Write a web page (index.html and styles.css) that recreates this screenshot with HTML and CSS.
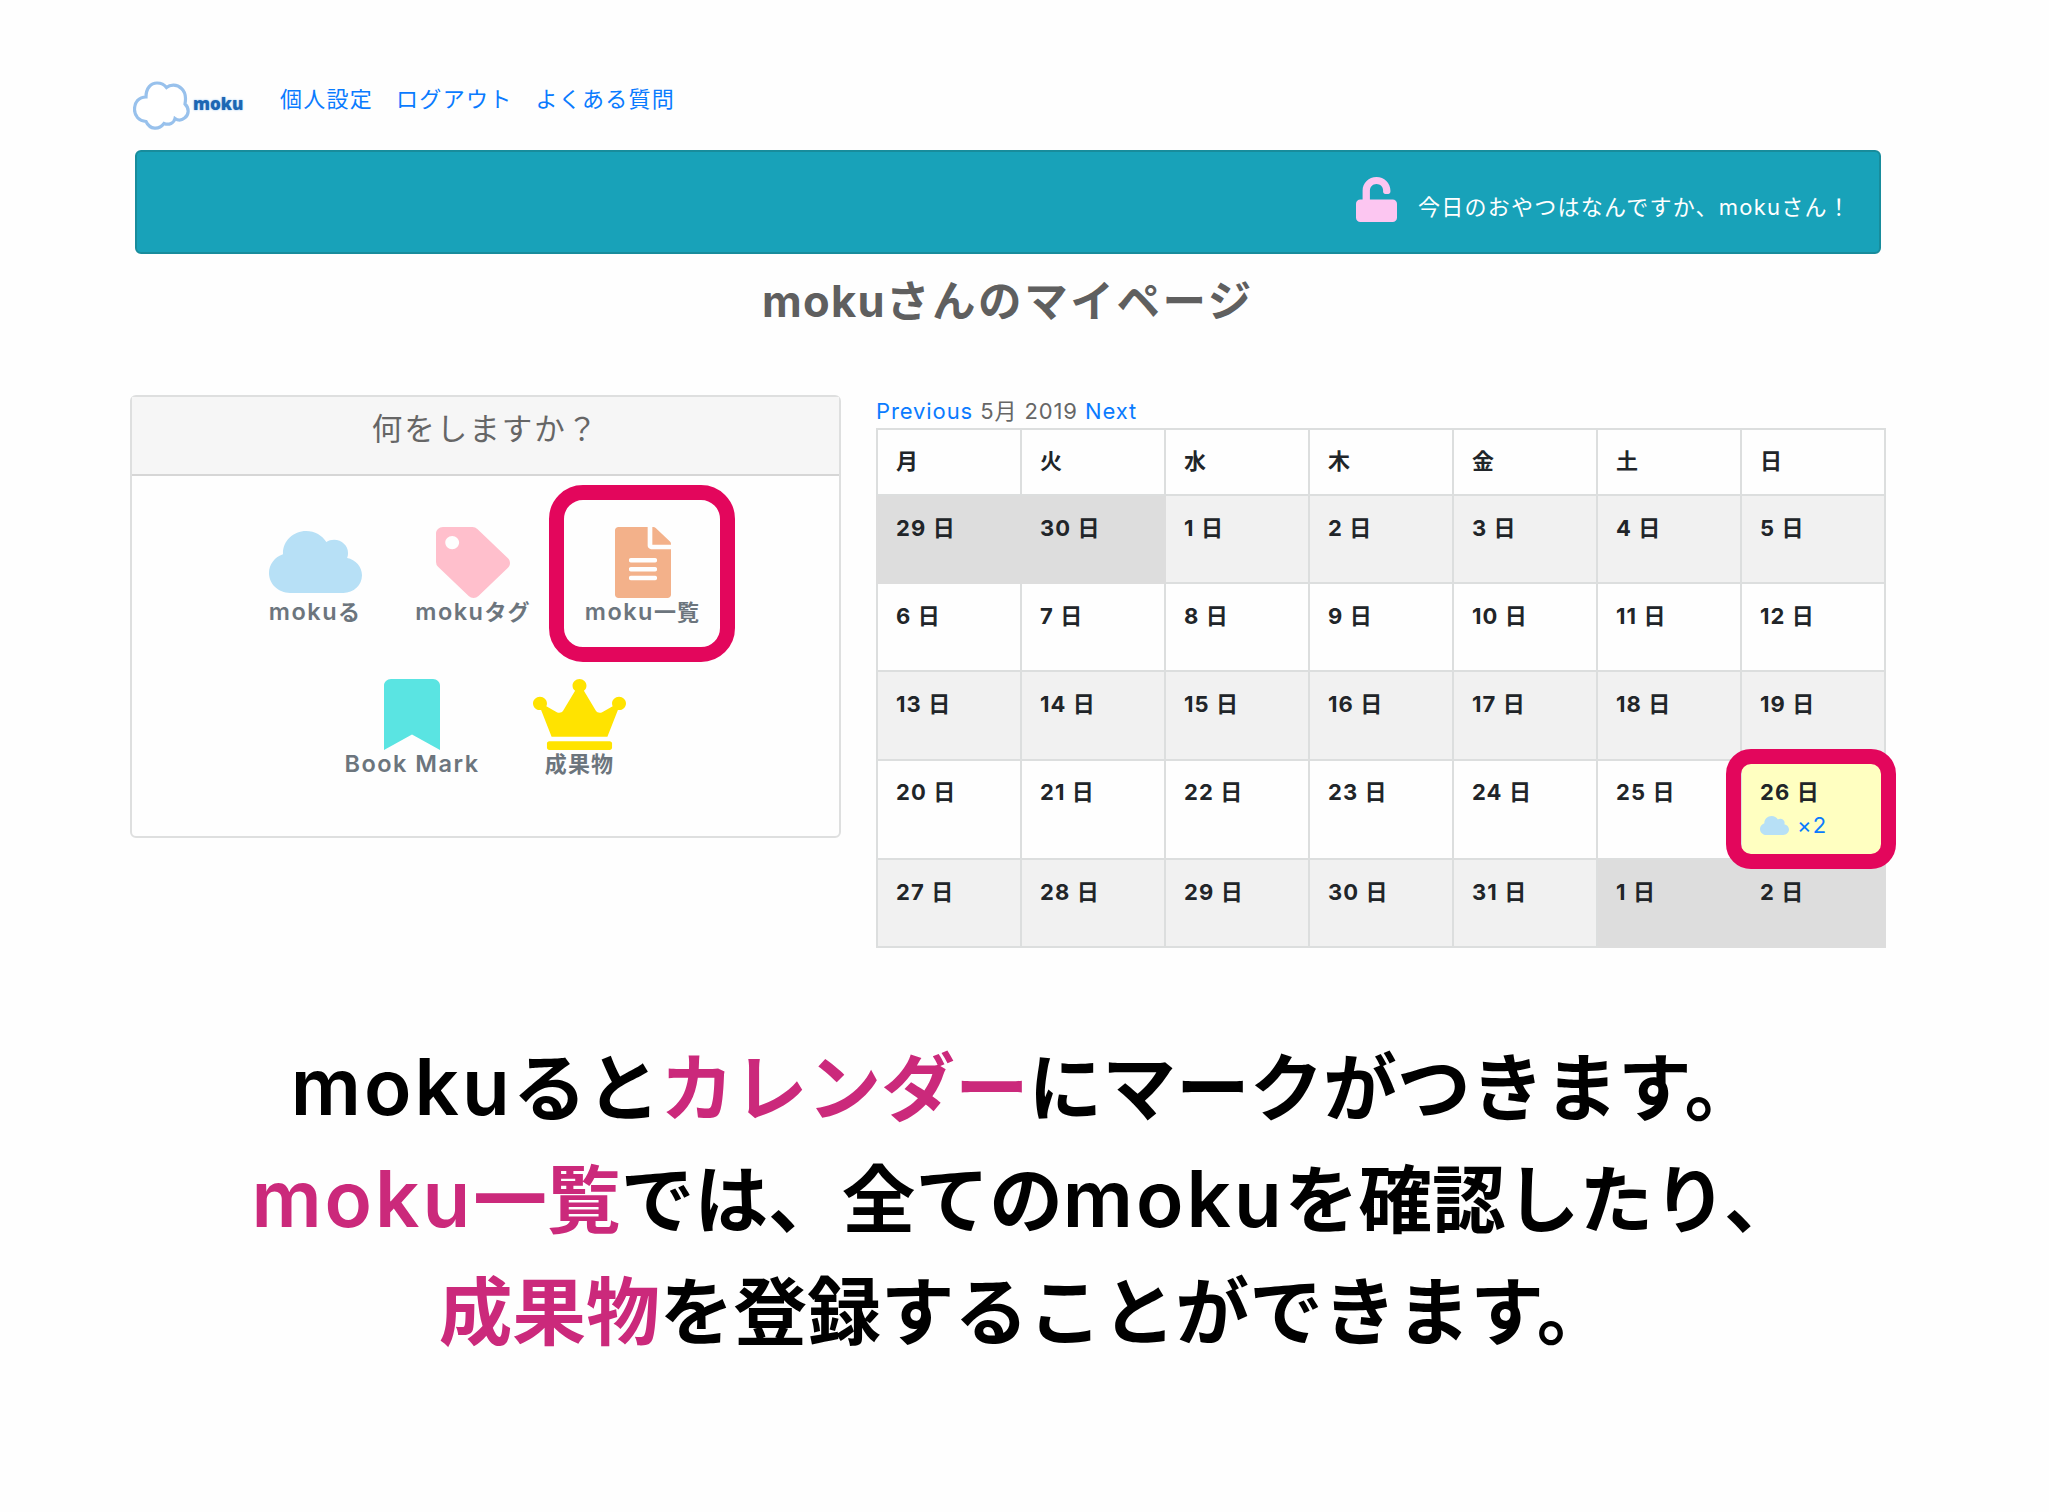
FILE: index.html
```html
<!DOCTYPE html>
<html lang="ja">
<head>
<meta charset="utf-8">
<title>mokuさんのマイページ</title>
<link rel="stylesheet" href="styles.css">
</head>
<body>
<svg class="defs" aria-hidden="true">
  <symbol id="cloud" viewBox="0 32 640 448" preserveAspectRatio="none"><path d="M537.600 226.600c4.100-10.700 6.400-22.400 6.400-34.600 0-53-43-96-96-96-19.700 0-38.100 6-53.300 16.200C367 64.200 315.300 32 256 32c-88.400 0-160 71.600-160 160 0 2.700.1 5.400.2 8.100C40.200 219.800 0 273.200 0 336c0 79.500 64.500 144 144 144h368c70.700 0 128-57.300 128-128 0-61.900-44-113.600-102.400-125.400z"/></symbol>
</svg>
<header class="nav">
  <a class="logo">
    <svg class="logo-cloud" viewBox="0 0 57 51"><path d="M13 17C13 8 18 3 24 3c4 0 7 1 9.500 4.500C37 4.500 44 4 48.500 8.500c4.500 4 4.500 10 3.500 15.500 4.500 4.500 4 11-.5 14-3 2.500-6.500 2.500-9.500.5-1 4.500-6 7-11 5-5 6.500-14 6.500-18-2C6 41 1.500 36 1.500 29.500 1.500 22 6 17 13 17z"/></svg>
    <span class="logo-text">moku</span>
  </a>
  <nav class="links"><a>個人設定</a><a>ログアウト</a><a>よくある質問</a></nav>
</header>
<section class="banner">
  <svg class="lock" viewBox="0 0 448 512" preserveAspectRatio="none"><path d="M400 256H152V152.900c0-39.600 31.700-72.500 71.300-72.900 40-.4 72.700 32.100 72.700 72v16c0 13.300 10.700 24 24 24h32c13.300 0 24-10.700 24-24v-16C376 68 307.500-.3 223.500 0 139.500.3 72 69.500 72 153.500V256H48c-26.500 0-48 21.500-48 48v160c0 26.500 21.500 48 48 48h352c26.500 0 48-21.500 48-48V304c0-26.500-21.500-48-48-48z"/></svg>
  <span class="greeting">今日のおやつはなんですか、mokuさん！</span>
</section>
<h1 class="title"><span class="title-name">moku</span>さんのマイページ</h1>
<main class="main">
  <section class="card">
    <h2 class="card-head">何をしますか？</h2>
    <div class="card-body">
      <div class="row row-top">
        <a class="item"><svg class="icon cloud"><use href="#cloud"/></svg><span><b>moku</b>る</span></a>
        <a class="item"><svg class="icon tag" viewBox="0 0 512 512" preserveAspectRatio="none"><path d="M0 252.118V48C0 21.490 21.490 0 48 0h204.118a48 48 0 0 1 33.941 14.059l211.882 211.882c18.745 18.745 18.745 49.137 0 67.882L293.823 497.941c-18.745 18.745-49.137 18.745-67.882 0L14.059 286.059A48 48 0 0 1 0 252.118zM112 64c-26.510 0-48 21.490-48 48s21.490 48 48 48 48-21.490 48-48-21.490-48-48-48z"/></svg><span><b>moku</b>タグ</span></a>
        <a class="item"><svg class="icon file" viewBox="0 0 384 512" preserveAspectRatio="none"><path d="M224 136V0H24C10.700 0 0 10.700 0 24v464c0 13.300 10.700 24 24 24h336c13.300 0 24-10.700 24-24V160H248c-13.200 0-24-10.800-24-24zm64 236c0 6.600-5.400 12-12 12H108c-6.600 0-12-5.400-12-12v-8c0-6.600 5.400-12 12-12h168c6.600 0 12 5.400 12 12zm0-64c0 6.600-5.400 12-12 12H108c-6.600 0-12-5.400-12-12v-8c0-6.600 5.400-12 12-12h168c6.600 0 12 5.400 12 12zm0-72v8c0 6.600-5.400 12-12 12H108c-6.600 0-12-5.400-12-12v-8c0-6.600 5.400-12 12-12h168c6.600 0 12 5.400 12 12zm96-114.100v6.100H256V0h6.100c6.400 0 12.500 2.500 17 7l97.900 98c4.500 4.500 7 10.600 7 16.900z"/></svg><span><b>moku</b>一覧</span><i class="mark mark-item"></i></a>
      </div>
      <div class="row row-bottom">
        <a class="item"><svg class="icon bookmark" viewBox="0 0 384 512" preserveAspectRatio="none"><path d="M0 512V48C0 21.500 21.500 0 48 0h288c26.500 0 48 21.500 48 48v464L192 400 0 512z"/></svg><span><b>Book Mark</b></span></a>
        <a class="item"><svg class="icon crown" viewBox="0 0 640 512" preserveAspectRatio="none"><path d="M528 448H112c-8.800 0-16 7.200-16 16v32c0 8.800 7.200 16 16 16h416c8.800 0 16-7.200 16-16v-32c0-8.800-7.200-16-16-16zm64-320c-26.500 0-48 21.500-48 48 0 7.100 1.600 13.700 4.400 19.800L476 239.200c-15.400 9.200-35.300 4-44.200-11.600L350.300 85C361 76.200 368 63 368 48c0-26.500-21.500-48-48-48s-48 21.500-48 48c0 15 7 28.200 17.700 37l-81.500 142.600c-8.900 15.600-28.900 20.800-44.200 11.600l-72.300-43.400c2.700-6 4.400-12.700 4.400-19.800 0-26.500-21.500-48-48-48S0 149.500 0 176s21.500 48 48 48c2.600 0 5.200-.4 7.700-.8L128 416h384l72.300-192.800c2.500.4 5.100.8 7.700.8 26.500 0 48-21.500 48-48s-21.500-48-48-48z"/></svg><span>成果物</span></a>
      </div>
    </div>
  </section>
  <section class="calendar">
    <div class="cal-head"><a>Previous</a> 5月 2019 <a>Next</a></div>
    <table class="grid">
      <tr class="head"><th>月</th><th>火</th><th>水</th><th>木</th><th>金</th><th>土</th><th>日</th></tr>
      <tr class="odd"><td class="out">29 日</td><td class="out">30 日</td><td>1 日</td><td>2 日</td><td>3 日</td><td>4 日</td><td>5 日</td></tr>
      <tr><td>6 日</td><td>7 日</td><td>8 日</td><td>9 日</td><td>10 日</td><td>11 日</td><td>12 日</td></tr>
      <tr class="odd mid"><td>13 日</td><td>14 日</td><td>15 日</td><td>16 日</td><td>17 日</td><td>18 日</td><td>19 日</td></tr>
      <tr class="tall"><td>20 日</td><td>21 日</td><td>22 日</td><td>23 日</td><td>24 日</td><td>25 日</td><td class="today">26 日<a class="count"><svg class="mini"><use href="#cloud"/></svg>×2</a><i class="mark mark-day"></i></td></tr>
      <tr class="odd"><td>27 日</td><td>28 日</td><td>29 日</td><td>30 日</td><td>31 日</td><td class="out">1 日</td><td class="out">2 日</td></tr>
    </table>
  </section>
</main>
<section class="caption">
  <p><span class="latin">moku</span>ると<em>カレンダー</em>にマークがつきます。</p>
  <p><em><span class="latin">moku</span>一覧</em>では、全ての<span class="latin">moku</span>を確認したり、</p>
  <p><em>成果物</em>を登録することができます。</p>
</section>
</body>
</html>
```
FILE: styles.css
```css
* { box-sizing: border-box; }
body {
  margin: 0;
  height: 1512px;
  overflow: hidden;
  background: #fefefe;
  color: #666;
  font: 22px/33px Inter, "Noto Sans CJK JP", sans-serif;
  white-space: nowrap;
}
.defs { display: block; width: 0; height: 0; }
a { color: #0a7bff; text-decoration: none; }
h1, h2, p { margin: 0; }

.nav { display: flex; height: 150px; padding: 80px 0 0 133px; }
.logo { display: flex; width: 147px; }
.logo-cloud { width: 57px; height: 51px; fill: #fff; stroke: #98c1ec; stroke-width: 3.2; }
.logo-text { margin: 8px 0 0 3px; color: #1c67b3; font: 900 17px/32px "Open Sans", sans-serif; text-shadow: 0 0 2px #7db5ec; }
.links { display: flex; gap: 23px; padding-top: 1px; font-family: "Noto Sans CJK JP", sans-serif; letter-spacing: 1.270px; }

.banner {
  display: flex;
  justify-content: flex-end;
  width: 1746px;
  height: 104px;
  margin-left: 135px;
  padding: 25px 34px 0 0;
  border: 2px solid #188c9c;
  border-radius: 6px;
  background: #18a2b9;
  color: #fff;
}
.lock { width: 41px; height: 45px; margin-right: 21px; fill: #fcc6f1; }
.greeting { width: 427px; padding-top: 14px; letter-spacing: 1.250px; }

.title { height: 141px; padding: 17px 0 0 762px; color: #5f5f5f; font: 700 43.500px/60px Inter, "Noto Sans CJK JP", sans-serif; letter-spacing: 2.600px; }
.title-name { letter-spacing: 1.300px; }

.main { display: flex; align-items: flex-start; gap: 35px; padding-left: 130px; }
.card { width: 711px; height: 443px; border: 2px solid #dedfdf; border-radius: 6px; }
.card-head { height: 79px; border-bottom: 2px solid #d6d6d6; background: #f6f6f6; font: 400 30.500px/61px "Noto Sans CJK JP", sans-serif; letter-spacing: 2px; text-align: center; }
.row { display: flex; height: 152px; }
.row-top { padding: 51px 0 0 121px; }
.row-bottom { padding: 51px 0 0 201px; }
.item { position: relative; display: flex; flex-direction: column; align-items: center; height: 101px; color: #6c757d; font-weight: 600; letter-spacing: 1.100px; }
.item b { font-size: 23.500px; font-weight: 600; line-height: 0; letter-spacing: 1.500px; }
.row-top .item { width: 124px; }
.row-top .item:nth-child(2) { width: 192px; }
.row-top .item:nth-child(3) { width: 147px; }
.row-bottom .item { width: 158px; }
.row-bottom .item + .item { width: 177px; }
.item span { margin-top: -2px; }
.icon { flex: none; width: 93px; height: 71px; }
.cloud { height: 62px; margin: 4px 0 5px; fill: #b7e0f6; }
.tag { width: 74px; fill: #ffbfcc; }
.file { width: 56px; fill: #f3b18a; }
.bookmark { width: 56px; fill: #5ae4e2; }
.crown { fill: #ffe300; }
.mark { position: absolute; border: 15px solid #e3065c; }
.mark-item { left: -20px; top: -42px; width: 186px; height: 177px; border-radius: 34px; }

.calendar { width: 1010px; }
.cal-head { height: 33px; letter-spacing: 0.900px; }
.grid { width: 1010px; border-collapse: collapse; table-layout: fixed; color: #212529; font-weight: 700; letter-spacing: 1.100px; }
th, td { height: 88px; padding: 16px 0 0 18px; border: 2px solid #dcdede; vertical-align: top; text-align: left; }
th { height: 66px; padding-top: 15px; }
.odd td { background: #f1f1f1; }
.odd td.out { background: #ddd; border-color: #ddd; }
.mid td { height: 89px; }
.tall td { height: 99px; padding-top: 15px; }
.today { position: relative; background: #ffffc1; }
.count { display: flex; align-items: center; gap: 8px; font-weight: 400; }
.mini { width: 29px; height: 19px; margin-top: -1px; fill: #b7e0f6; }
.mark-day { left: -16px; top: -12px; width: 170px; height: 120px; border-radius: 25px; }

.caption { padding-top: 85px; color: #000; font: 700 73.700px/112px Inter, "Noto Sans CJK JP", sans-serif; text-align: center; }
.caption p { height: 112px; }
.caption em { color: #cb297b; font-style: normal; }
.latin { font-size: 78px; font-weight: 600; line-height: 0; letter-spacing: 3px; }
```
